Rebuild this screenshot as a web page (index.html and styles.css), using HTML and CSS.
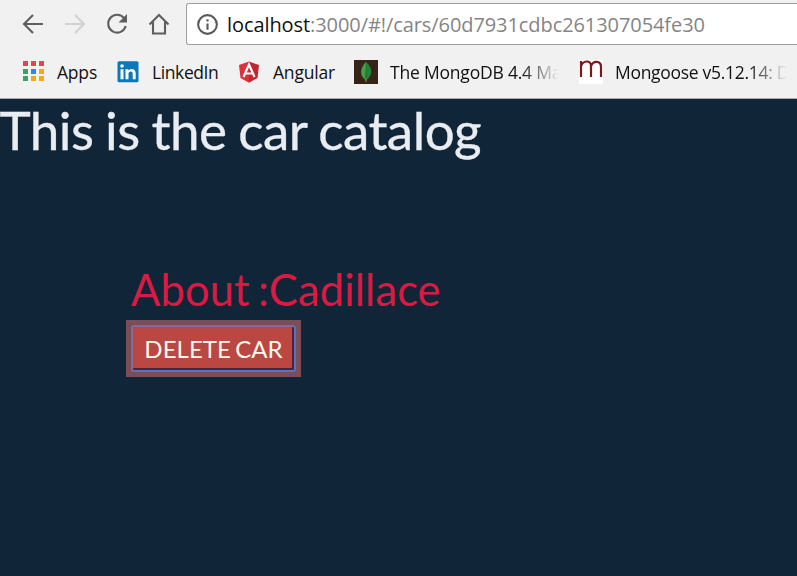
FILE: index.html
```html
<!DOCTYPE html>
<html lang="en">
<head>
<meta charset="utf-8">
<title>Car catalog</title>
<link rel="stylesheet" href="styles.css">
</head>
<body>
<header class="chrome">
  <div class="toolbar">
    <svg class="nav" viewBox="0 0 24 24"><path d="M22 12H4M12 3l-9 9 9 9"/></svg>
    <svg class="nav disabled" viewBox="0 0 24 24"><path d="M2 12h18M12 3l9 9-9 9"/></svg>
    <svg class="nav" viewBox="0 0 24 24"><path d="M19.100 6.200A8.900 8.900 0 1 0 20.700 14"/><path class="solid" d="M22 2v8.500H13.500z"/></svg>
    <svg class="nav home" viewBox="0 0 24 24"><path d="M2.500 12.500L12 3l9.500 9.500M6 10v11.500h12V10"/></svg>
    <div class="address">
      <svg class="info" viewBox="0 0 20 20"><circle cx="10" cy="10" r="8.900"/><path d="M10 9v6M10 5v2.200"/></svg>
      <span class="url"><span class="host">localhost</span>:3000/#!/cars/60d7931cdbc261307054fe30</span>
    </div>
  </div>
  <nav class="bookmarks">
    <a class="bookmark apps"><svg class="icon" viewBox="0 0 24 24"><g fill="#e6454d"><path d="M2 1h5v5H2zM10 1h5v5h-5zM18 1h5v5h-5z"/></g><g><path fill="#3aa35c" d="M2 9h5v5H2zM2 16h5v5H2z"/><path fill="#2f86eb" d="M10 9h5v5h-5z"/><path fill="#f2aa1c" d="M18 9h5v5h-5zM10 16h5v5h-5zM18 16h5v5h-5z"/></g></svg><span class="label">Apps</span></a>
    <a class="bookmark linkedin"><svg class="icon" viewBox="0 0 24 24"><rect x="1.500" y="1.300" width="21" height="21" rx="1.500" fill="#0a78b9"/><path fill="#fff" d="M4.500 9.300h3v10h-3zM9.500 9.300h3v1.500c2-3 7.200-2 7.200 2.500v6h-3v-5.500c0-3-4.200-3-4.200 0v5.500h-3z"/><circle cx="6" cy="6" r="1.800" fill="#fff"/></svg><span class="label">LinkedIn</span></a>
    <a class="bookmark angular"><svg class="icon" viewBox="0 0 24 24"><path fill="#dc303b" d="M12 1.500L2 5l1.500 13L12 22.700z"/><path fill="#bd2733" d="M12 1.500L22 5l-1.500 13-8.500 4.700z"/><path d="M6.500 17L12 4.500 17.500 17M8.500 13.500h7" fill="none" stroke="#fff" stroke-width="2.200"/></svg><span class="label">Angular</span></a>
    <a class="bookmark mongo"><svg class="icon" viewBox="0 0 24 24"><path fill="#352417" d="M0 0h24v24H0z"/><path fill="#43a047" d="M12 2c-6 6-7 13-.5 18z"/><path fill="#218539" d="M12 2c7 6 7 13 .3 18z"/><path d="M12 18v4" stroke="#8b9d79"/></svg><span class="label fade">The MongoDB 4.4 Ma</span></a>
    <a class="bookmark mongoose"><svg class="icon" viewBox="0 0 24 24"><path fill="#fff" d="M0 0h24v24H0z"/><path d="M2 17V1M2 6C4 .5 12-.5 12 6v11M12 6c2-5.500 10-6 10 1v10" fill="none" stroke="#7c171c" stroke-width="2.200"/></svg><span class="label fade">Mongoose v5.12.14: D</span></a>
  </nav>
</header>
<main class="page">
  <h1>This is the car catalog</h1>
  <section class="car">
    <h2>About :Cadillace</h2>
    <button class="delete"><span>DELETE CAR</span></button>
  </section>
</main>
</body>
</html>
```
FILE: styles.css
```css
* { box-sizing: border-box; }
body { margin: 0; height: 576px; overflow: hidden; background: #102538; font-family: Lato, sans-serif; }
.chrome { height: 99px; background: #f1f1f1; border-bottom: 1px solid #a9adb1; font-family: "Open Sans", sans-serif; }
.toolbar { display: flex; align-items: center; height: 48px; padding: 0 0 1px 21px; }
.nav { width: 24px; height: 24px; margin-right: 18px; flex: none; fill: none; stroke: #5c5e60; stroke-width: 2.1; }
.nav .solid { fill: #5c5e60; stroke: none; }
.nav.disabled { stroke: #d2d2d2; }
.nav.home { margin-right: 15px; }
.address { display: flex; align-items: center; flex: 1; height: 42px; margin-top: 1px; padding-left: 10px; background: #fff; border: 1px solid #a0a0a0; border-right: 0; border-radius: 3px 0 0 3px; }
.info { width: 21px; height: 21px; margin-right: 9px; flex: none; fill: none; stroke: #5a5a5a; stroke-width: 2; }
.url { padding-top: 2px; color: #858585; font-size: 20px; line-height: 28px; letter-spacing: -.08px; white-space: nowrap; }
.host { color: #111; }
.bookmarks { display: flex; height: 48px; align-items: center; padding-left: 21px; }
.bookmark { display: flex; align-items: center; flex: none; color: #111; font-size: 17.500px; line-height: 26px; letter-spacing: -.2px; white-space: nowrap; }
.icon { width: 24px; height: 24px; margin-right: 12px; flex: none; }
.apps { width: 95px; }
.linkedin { width: 121px; letter-spacing: -.4px; }
.angular { width: 117px; }
.mongo { width: 225px; }
.mongoose { width: 207px; letter-spacing: -.3px; }
.fade { -webkit-mask-image: linear-gradient(to right, #000 calc(100% - 40px), transparent calc(100% - 2px)); mask-image: linear-gradient(to right, #000 calc(100% - 40px), transparent calc(100% - 2px)); }
h1, h2 { margin: 0; font-weight: 400; white-space: nowrap; }
h1 { color: #e9edf1; font-size: 53px; line-height: 62px; letter-spacing: -.53px; word-spacing: -1.3px; text-indent: -.6px; -webkit-text-stroke: .35px #e9edf1; }
.car { padding: 102px 0 0 126px; }
h2 { height: 57px; padding-left: 5px; color: #d81b43; font-size: 43.500px; line-height: 52px; letter-spacing: .09px; word-spacing: -3px; }
.delete { display: block; width: 175px; height: 57px; padding: 5px; border: 0; background: #7b4d56; font: 24px/38px Lato, sans-serif; letter-spacing: .05px; word-spacing: -2px; color: #fff8ed; }
.delete span { display: block; height: 47px; padding: 3px 0 1px; background: #bb4743; border: 2px solid #5a73bd; border-top-color: #806b9f; border-left-color: #806b9f; border-radius: 3px; box-shadow: inset -2px -2px #4b2438; white-space: nowrap; }
```
